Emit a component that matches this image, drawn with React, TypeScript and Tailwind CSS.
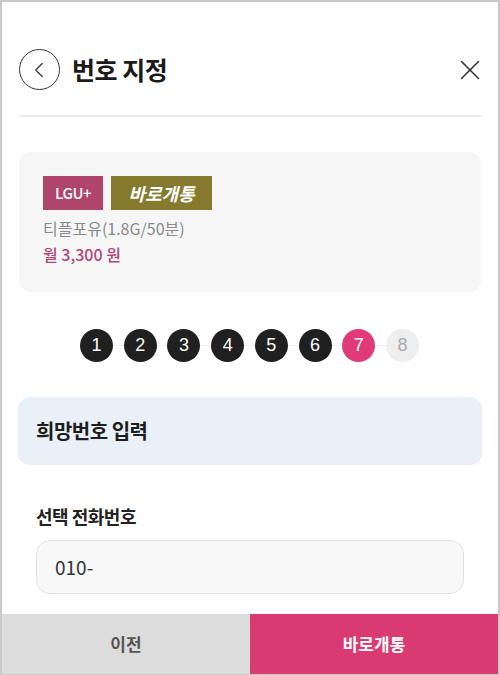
import { ChevronLeft, X } from "lucide-react";

const font = { fontFamily: '"Noto Sans CJK KR", "Noto Sans", sans-serif' };

const steps = [1, 2, 3, 4, 5, 6, 7, 8];
const current = 7;

export default function App() {
  return (
    <div
      className="flex flex-col w-[500px] h-[675px] bg-white border-2 border-b border-[#c9c9c9] overflow-hidden"
      style={font}
    >
      <div className="flex flex-col flex-1 px-[16px]">
        <Header />
        <div className="h-[2px] bg-[#ececec] mx-[1px]" />
        <PlanCard />
        <Steps />
        <div className="flex items-center h-[68px] mt-[35px] px-[18px] rounded-xl bg-[#eaf0f8]">
          <p className="text-[20px] font-bold text-[#1d1d1d] tracking-[-0.5px]">희망번호 입력</p>
        </div>
        <div className="flex flex-col px-[18px]">
          <p className="mt-[38px] text-[18px] font-semibold text-[#222] tracking-[-0.5px] leading-[26px]">
            선택 전화번호
          </p>
          <div className="flex items-center h-[54px] mt-[11px] px-[18px] rounded-[14px] bg-[#f8f8f8] border border-[#e2e2e2]">
            <span className="text-[19px] text-[#333]">010-</span>
          </div>
        </div>
      </div>
      <div className="flex h-[60px]">
        <button className="flex-1 bg-[#dcdcdc] text-[17px] font-semibold text-[#555]">이전</button>
        <button className="flex-1 bg-[#d93a72] text-[17px] font-bold text-white">바로개통</button>
      </div>
    </div>
  );
}

function Header() {
  return (
    <div className="flex items-center h-[113px] pt-[22px]">
      <div className="flex items-center justify-center size-[41px] ml-[1px] rounded-full border border-[#333]">
        <ChevronLeft className="size-[26px] text-[#333] -ml-[2px]" strokeWidth={1.1} />
      </div>
      <p className="ml-[12px] text-[25px] font-bold text-[#1a1a1a] tracking-[-0.5px]">번호 지정</p>
      <X className="ml-auto mr-[-5px] size-[34px] text-[#333]" strokeWidth={1.1} />
    </div>
  );
}

function PlanCard() {
  return (
    <div className="flex flex-col mt-[35px] mx-[1px] px-[24px] pt-[24px] pb-[26px] rounded-xl bg-[#f6f6f7]">
      <div className="flex gap-[8px]">
        <span className="flex items-center justify-center w-[60px] h-[34px] bg-[#b0456b] text-[15px] font-medium text-white tracking-[-0.5px]">
          LGU+
        </span>
        <span className="flex items-center justify-center w-[101px] h-[34px] bg-[#857a2d] text-[18px] font-bold italic text-white">
          바로개통
        </span>
      </div>
      <p className="mt-[6px] text-[16px] text-[#8a8a8a] leading-[24px]">티플포유(1.8G/50분)</p>
      <p className="mt-[2px] text-[16px] font-medium text-[#b0457a] leading-[24px]">월 3,300 원</p>
    </div>
  );
}

function Steps() {
  return (
    <div className="flex justify-center mt-[37px]">
      <div className="relative flex gap-[10.7px] ml-[-1px]">
        <div className="absolute left-[16px] right-[16px] top-[16px] h-px bg-[#eeeeee]" />
        {steps.map((n) => (
          <div
            key={n}
            className={`relative flex items-center justify-center size-[33px] rounded-full text-[18px] ${
              n === current
                ? "bg-[#e03b77] text-white"
                : n < current
                  ? "bg-[#202020] text-white"
                  : "bg-[#eeeeee] text-[#aaa]"
            }`}
            style={{ fontFamily: '"Liberation Sans", sans-serif' }}
          >
            {n}
          </div>
        ))}
      </div>
    </div>
  );
}
